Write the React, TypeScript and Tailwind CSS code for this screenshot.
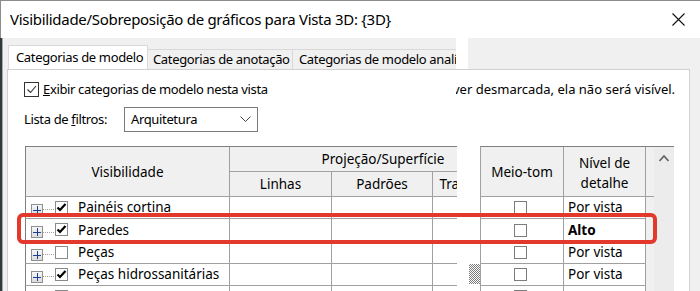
import React from "react";

type Row = {
  name: string;
  checked: boolean;
  detail: string;
  bold?: boolean;
  hatch?: boolean;
  h: string;
};

const rows: Row[] = [
  { name: "Painéis cortina", checked: true, detail: "Por vista", h: "h-[22px]" },
  { name: "Paredes", checked: true, detail: "Alto", bold: true, h: "h-[23px]" },
  { name: "Peças", checked: false, detail: "Por vista", h: "h-[22px]" },
  { name: "Peças hidrossanitárias", checked: true, detail: "Por vista", hatch: true, h: "h-[22px]" },
  { name: "", checked: false, detail: "", h: "h-[22px]" },
];

function PlusBox() {
  return (
    <div className="flex h-[12px] w-[12px] items-center justify-center border border-[#8e8f8f] bg-gradient-to-b from-[#f7f7f7] to-[#dcdcdc]">
      <svg width="8" height="8" viewBox="0 0 8 8">
        <path d="M0 4h8M4 0v8" stroke="#1c3f94" strokeWidth="1" shapeRendering="crispEdges" />
      </svg>
    </div>
  );
}

function TreeCheck({ checked }: { checked: boolean }) {
  return (
    <div className="flex h-[13px] w-[13px] items-center justify-center border border-[#8a8a8a] bg-white">
      {checked && (
        <svg width="11" height="11" viewBox="0 0 11 11">
          <path d="M1.5 5.5l2.5 2.5 5.5-6" fill="none" stroke="#000" strokeWidth="2.2" />
        </svg>
      )}
    </div>
  );
}

export default function App() {
  return (
    <div className="flex h-[291px] w-[700px] flex-col overflow-hidden bg-[#f0f0f0] font-['Noto_Sans',sans-serif] text-[13px] tracking-[-0.35px] text-black">
      {/* Title bar */}
      <div className="flex h-[38px] shrink-0 items-center justify-between border-l border-t border-[#8c8c8c] bg-white pl-[9px] pr-[15px]">
        <span className="whitespace-nowrap text-[15px] leading-none tracking-[-0.3px]">
          Visibilidade/Sobreposição de gráficos para Vista 3D: {"{3D}"}
        </span>
        <svg width="13" height="13" viewBox="0 0 13 13">
          <path d="M0.5 0.5l12 12M12.5 0.5l-12 12" stroke="#111" strokeWidth="1.1" />
        </svg>
      </div>

      <div className="flex min-h-0 flex-1">
        {/* window edge */}
        <div className="w-[2px] bg-[#2c3c3e]" />
        <div className="w-[1px] bg-[#a8a8a8]" />

        <div className="flex min-w-0 flex-1 flex-col pl-[4px]">
          {/* Tabs */}
          <div className="flex h-[31px] shrink-0 items-end">
            <div className="ml-[1px] flex h-full w-[448px] items-end overflow-hidden whitespace-nowrap">
              <div className="relative z-10 -mb-px flex h-[25px] w-[140px] shrink-0 items-center border-l border-r border-t border-[#d9d9d9] bg-white pl-[7px]">
                Categorias de modelo
              </div>
              <div className="flex h-[20px] w-[145px] shrink-0 items-center border-r border-t border-[#d9d9d9] pl-[5px]">
                Categorias de anotação
              </div>
              <div className="flex h-[20px] w-[200px] shrink-0 items-center border-t border-[#d9d9d9] pl-[6px]">
                Categorias de modelo analítico
              </div>
            </div>
            <div className="h-full w-[12px] bg-white" />
          </div>

          {/* Panel */}
          <div className="flex w-[683px] flex-1 flex-col border border-[#d0d0d0] bg-white">
            {/* Show categories */}
            <div className="mt-[12px] flex h-[15px] items-center">
              <div className="flex w-[448px] items-center pl-[16px]">
                <div className="flex h-[15px] w-[15px] items-center justify-center border border-[#333]">
                  <svg width="13" height="13" viewBox="0 0 13 13">
                    <path d="M2.5 6.5l3 3 5.5-6.5" fill="none" stroke="#333" strokeWidth="1.1" />
                  </svg>
                </div>
                <span className="ml-[4px] whitespace-nowrap">
                  <span className="underline">E</span>xibir categorias de modelo nesta vista
                </span>
              </div>
              <div className="flex-1 overflow-hidden whitespace-nowrap tracking-normal">
                <span className="-ml-[3px] inline-block">ver desmarcada, ela não será visível.</span>
              </div>
            </div>

            {/* Filter list */}
            <div className="mt-[10px] flex items-center pl-[16px]">
              <span className="w-[100px]">
                Lista de <span className="underline">f</span>iltros:
              </span>
              <div className="flex h-[25px] w-[134px] items-center justify-between border border-[#7a7a7a] pl-[6px] pr-[6px]">
                <span>Arquitetura</span>
                <svg width="11" height="7" viewBox="0 0 11 7">
                  <path d="M0.5 0.5l5 5 5-5" fill="none" stroke="#444" strokeWidth="1" />
                </svg>
              </div>
            </div>

            {/* Table */}
            <div className="mt-[14px] flex pl-[17px] text-[13.5px] tracking-normal">
              <div className="flex flex-col">
                {/* Header */}
                <div className="flex h-[51px]">
                  <div className="flex w-[432px] border-b border-l border-t border-b-[#a0a0a0] border-l-[#7f7f7f] border-t-[#7f7f7f] bg-[#f0f0f0]">
                    <div className="flex w-[204px] items-center justify-center border-r border-[#a0a0a0] pt-[2px]">
                      Visibilidade
                    </div>
                    <div className="flex w-[227px] flex-col">
                      <div className="h-[25px] overflow-hidden border-b border-[#a0a0a0]">
                        <div className="w-[306px] pt-[2px] text-center leading-[21px]">Projeção/Superfície</div>
                      </div>
                      <div className="flex flex-1">
                        <div className="flex w-[102px] items-center justify-center border-r border-[#a0a0a0]">Linhas</div>
                        <div className="flex w-[101px] items-center justify-center border-r border-[#a0a0a0]">Padrões</div>
                        <div className="flex w-[24px] items-center overflow-hidden">
                          <div className="w-[102px] shrink-0 text-center">Transparência</div>
                        </div>
                      </div>
                    </div>
                  </div>
                  <div className="w-[23px] bg-white" />
                  <div className="flex border-b border-l border-t border-b-[#a0a0a0] border-l-[#a0a0a0] border-t-[#7f7f7f] bg-[#f0f0f0]">
                    <div className="flex w-[83px] items-center justify-center border-r border-[#a0a0a0] pt-[2px]">
                      Meio-tom
                    </div>
                    <div className="flex w-[82px] flex-col items-center justify-center border-r border-[#a0a0a0] pt-[2px] leading-[20px]">
                      <span>Nível de</span>
                      <span>detalhe</span>
                    </div>
                    <div className="w-[8px]" />
                  </div>
                </div>

                {/* Rows */}
                {rows.map((r, i) => (
                  <div key={i} className={`flex ${r.h}`}>
                    <div className="flex w-[432px] border-b border-l border-b-[#a0a0a0] border-l-[#7f7f7f]">
                      <div className="flex w-[204px] items-center border-r border-[#a0a0a0] pl-[5px]">
                        <div className="mt-[4px] flex items-center">
                          <PlusBox />
                          <div className="w-[11px] border-t border-dotted border-[#a0a0a0]" />
                        </div>
                        <div className="ml-[1px] mt-[-1px]">
                          <TreeCheck checked={r.checked} />
                        </div>
                        <span className="ml-[10px] whitespace-nowrap">{r.name}</span>
                      </div>
                      <div className="w-[102px] border-r border-[#a0a0a0]" />
                      <div className="w-[101px] border-r border-[#a0a0a0]" />
                      <div className="w-[24px]" />
                    </div>
                    <div className="flex w-[23px] justify-end bg-white">
                      {r.hatch && (
                        <div className="h-[20px] w-[11px] bg-[repeating-conic-gradient(#7a7a7a_0%_25%,#ffffff_0%_50%)] bg-[length:2px_2px]" />
                      )}
                    </div>
                    <div className="flex">
                      <div className="flex w-[84px] items-center justify-center border-b border-l border-r border-[#a0a0a0] pr-[3px]">
                        <div className="h-[13px] w-[13px] border border-[#7c7c7c] bg-white" />
                      </div>
                      <div
                        className={`flex w-[82px] items-center whitespace-nowrap border-b border-r border-[#a0a0a0] pl-[4px] ${
                          r.bold ? "font-bold" : ""
                        }`}
                      >
                        {r.detail}
                      </div>
                      <div className="w-[8px] bg-[#f0f0f0]" />
                    </div>
                  </div>
                ))}
              </div>

              {/* Scrollbar */}
              <div className="flex w-[20px] justify-center border-t border-[#7f7f7f] bg-[#ececec] pt-[8px]">
                <svg width="10" height="7" viewBox="0 0 10 7">
                  <path d="M0.5 6l4.5-5 4.5 5" fill="none" stroke="#606060" strokeWidth="1.6" />
                </svg>
              </div>
            </div>
          </div>
        </div>
      </div>

      {/* Highlight */}
      <div className="pointer-events-none absolute left-[17px] top-[213px] h-[31px] w-[640px] rounded-[6px] border-4 border-[#e2392c]" />
    </div>
  );
}
